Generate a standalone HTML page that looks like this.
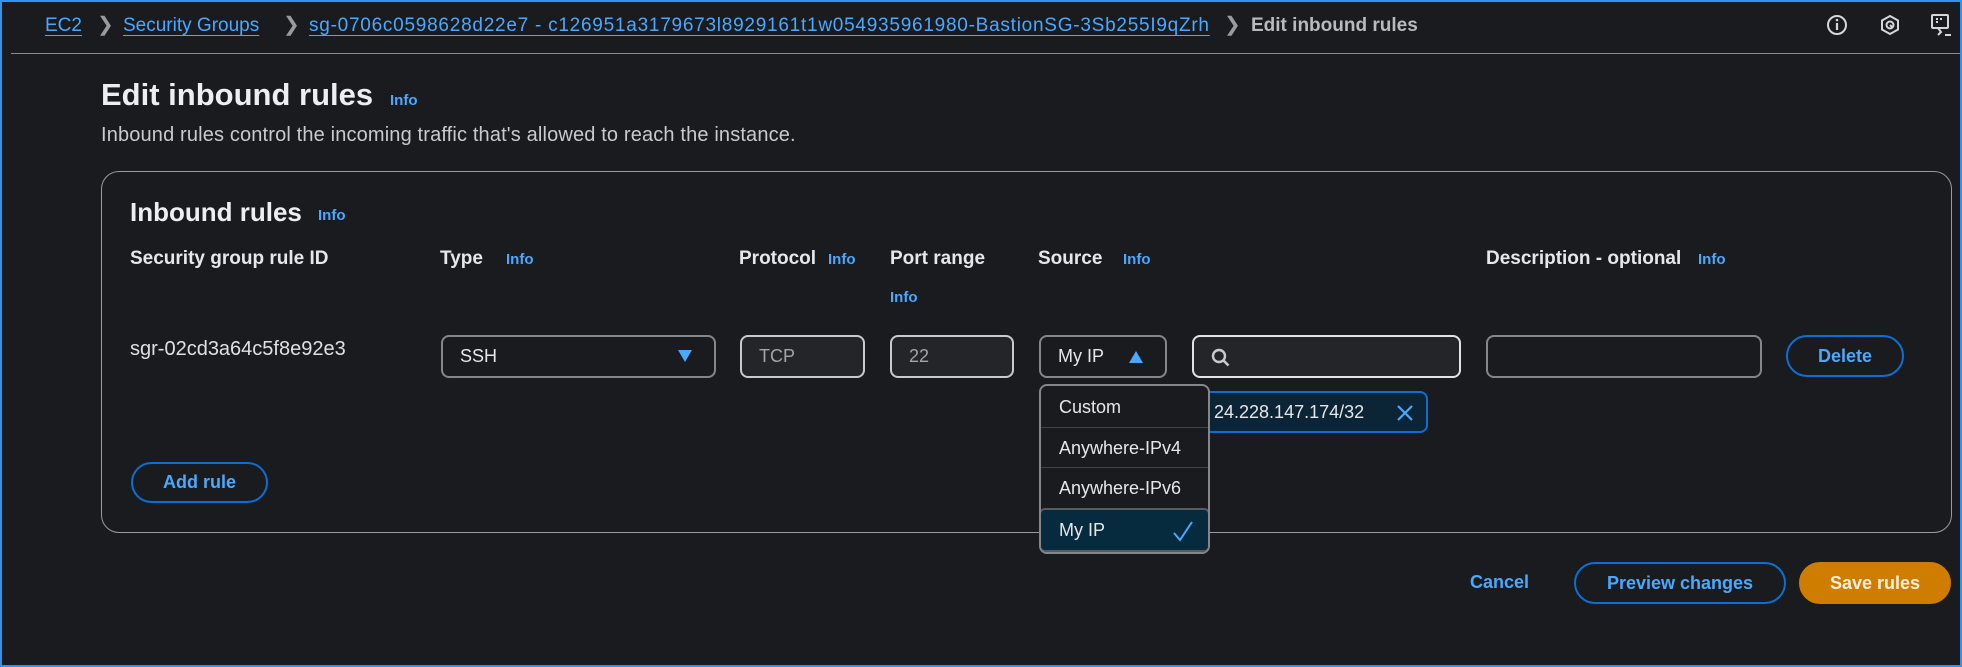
<!DOCTYPE html>
<html><head><meta charset="utf-8"><style>
*{box-sizing:border-box;margin:0;padding:0}
body{width:1962px;height:667px;background:#1a1b1e;font-family:"Liberation Sans",sans-serif;color:#d5d6da;position:relative;overflow:hidden}
.frame{position:absolute;left:0;top:0;width:1962px;height:667px;border:2px solid #2f93f0}
.a{position:absolute;line-height:1;white-space:nowrap}
.lnk{color:#4aa8ff;text-decoration:underline;text-underline-offset:4px}
.info{color:#4aa8ff;font-weight:bold;font-size:15px}
.hd{font-weight:bold;font-size:19px;color:#e6e7ea}
.box{position:absolute;border-radius:8px;display:flex;align-items:center;font-size:18px}
.btn{position:absolute;border-radius:22px;border:2px solid #0b6fd6;color:#4aa8ff;font-weight:bold;font-size:18px;display:flex;align-items:center;justify-content:center}
.chev{color:#9a9ba0;font-size:20px}
</style></head><body>
<div class="frame"></div>
<div class="a lnk" style="left:45px;top:16px;font-size:19px">EC2</div>
<div class="a chev" style="left:97px;top:15px">&#x276F;</div>
<div class="a lnk" style="left:123px;top:16px;font-size:19px">Security Groups</div>
<div class="a chev" style="left:283px;top:15px">&#x276F;</div>
<div class="a lnk" style="left:309px;top:16px;font-size:19px;letter-spacing:0.75px">sg-0706c0598628d22e7 - c126951a3179673l8929161t1w054935961980-BastionSG-3Sb255I9qZrh</div>
<div class="a chev" style="left:1224px;top:15px">&#x276F;</div>
<div class="a" style="left:1251px;top:16px;font-size:19px;color:#b9babe;font-weight:bold">Edit inbound rules</div>
<svg class="a" style="left:1825px;top:13px" width="24" height="24" viewBox="0 0 24 24"><circle cx="12" cy="12" r="9" fill="none" stroke="#d5d6da" stroke-width="2"/><line x1="12" y1="10" x2="12" y2="17" stroke="#d5d6da" stroke-width="2.2"/><circle cx="12" cy="7" r="1.3" fill="#d5d6da"/></svg>
<svg class="a" style="left:1878px;top:13px" width="24" height="24" viewBox="0 0 24 24"><path d="M12 3l8 4.5v9L12 21l-8-4.5v-9z" fill="none" stroke="#d5d6da" stroke-width="2"/><circle cx="12" cy="12" r="3.5" fill="none" stroke="#d5d6da" stroke-width="2"/><path d="M12 12l3 3" stroke="#d5d6da" stroke-width="2"/></svg>
<svg class="a" style="left:1929px;top:12px" width="26" height="26" viewBox="0 0 26 26"><rect x="3" y="3" width="16" height="13" rx="1" fill="none" stroke="#d5d6da" stroke-width="2"/><path d="M7 7h2M11 7h2M7 10h2" stroke="#d5d6da" stroke-width="2"/><path d="M9 16l3 4-3 3" fill="none" stroke="#d5d6da" stroke-width="2"/><path d="M16 23h6" stroke="#d5d6da" stroke-width="2"/></svg>
<div class="a" style="left:11px;top:53px;width:1949px;height:1px;background:#8a8b90"></div>

<div class="a" style="left:101px;top:79px;font-size:31px;font-weight:bold;color:#eeeef0">Edit inbound rules</div>
<div class="a info" style="left:390px;top:93px">Info</div>
<div class="a" style="left:101px;top:125px;font-size:20px;letter-spacing:0.15px;color:#c9cace">Inbound rules control the incoming traffic that's allowed to reach the instance.</div>

<div class="a" style="left:101px;top:171px;width:1851px;height:362px;border:1px solid #9a9ba0;border-radius:18px"></div>
<div class="a" style="left:130px;top:199px;font-size:26px;font-weight:bold;color:#eeeef0">Inbound rules</div>
<div class="a info" style="left:318px;top:208px">Info</div>

<div class="a hd" style="left:130px;top:249px">Security group rule ID</div>
<div class="a hd" style="left:440px;top:249px">Type</div><div class="a info" style="left:506px;top:252px">Info</div>
<div class="a hd" style="left:739px;top:249px">Protocol</div><div class="a info" style="left:828px;top:252px">Info</div>
<div class="a hd" style="left:890px;top:249px">Port range</div><div class="a info" style="left:890px;top:290px">Info</div>
<div class="a hd" style="left:1038px;top:249px">Source</div><div class="a info" style="left:1123px;top:252px">Info</div>
<div class="a hd" style="left:1486px;top:249px">Description - optional</div><div class="a info" style="left:1698px;top:252px">Info</div>

<div class="a" style="left:130px;top:339px;font-size:20px;color:#dfe0e3">sgr-02cd3a64c5f8e92e3</div>
<div class="box" style="left:441px;top:335px;width:275px;height:43px;border:2px solid #85868b;padding-left:17px;color:#e6e7ea">SSH<span style="position:absolute;right:22px;top:13px;width:0;height:0;border-left:7px solid transparent;border-right:7px solid transparent;border-top:12px solid #4aa8ff"></span></div>
<div class="box" style="left:740px;top:335px;width:125px;height:43px;border:2px solid #c9cace;background:#232528;padding-left:17px;color:#a4a5aa">TCP</div>
<div class="box" style="left:890px;top:335px;width:124px;height:43px;border:2px solid #c9cace;background:#232528;padding-left:17px;color:#a4a5aa">22</div>
<div class="box" style="left:1039px;top:335px;width:128px;height:43px;border:2px solid #85868b;padding-left:17px;color:#e6e7ea">My IP<span style="position:absolute;right:22px;top:14px;width:0;height:0;border-left:7px solid transparent;border-right:7px solid transparent;border-bottom:12px solid #4aa8ff"></span></div>
<div class="box" style="left:1192px;top:335px;width:269px;height:43px;border:2px solid #e2e3e6;background:#232528">
<svg style="position:absolute;left:17px;top:11px" width="20" height="20" viewBox="0 0 20 20"><circle cx="8" cy="8" r="6" fill="none" stroke="#c9cace" stroke-width="2.4"/><path d="M12.5 12.5l5 5" stroke="#c9cace" stroke-width="2.6"/></svg></div>
<div class="box" style="left:1486px;top:335px;width:276px;height:43px;border:2px solid #85868b"></div>
<div class="btn" style="left:1786px;top:335px;width:118px;height:42px">Delete</div>

<div class="box" style="left:1180px;top:391px;width:248px;height:42px;border:2px solid #0b6fd6;background:#0c2536;color:#e6e7ea;padding-left:32px">24.228.147.174/32
<svg style="position:absolute;right:12px;top:11px" width="18" height="18" viewBox="0 0 18 18"><path d="M2 2l14 14M16 2L2 16" stroke="#4aa8ff" stroke-width="2.2"/></svg></div>

<div class="a" style="left:1039px;top:384px;width:171px;height:170px;border:2px solid #85868b;border-radius:8px;background:#1a1b1e;overflow:hidden;font-size:18px;color:#e6e7ea">
<div style="height:42px;display:flex;align-items:center;padding-left:18px;border-bottom:1px solid #414246">Custom</div>
<div style="height:40px;display:flex;align-items:center;padding-left:18px;border-bottom:1px solid #414246">Anywhere-IPv4</div>
<div style="height:40px;display:flex;align-items:center;padding-left:18px">Anywhere-IPv6</div>
<div style="height:44px;display:flex;align-items:center;padding-left:18px;background:#062a3e;border:2px solid #5a5b60;border-radius:6px;margin:0 -2px;position:relative">My IP
<svg style="position:absolute;right:14px;top:9px" width="22" height="24" viewBox="0 0 22 24"><path d="M2 14l6 7L20 3" fill="none" stroke="#4aa8ff" stroke-width="2"/></svg></div>
</div>

<div class="btn" style="left:131px;top:462px;width:137px;height:41px">Add rule</div>

<div class="a" style="left:1470px;top:573px;font-size:18px;font-weight:bold;color:#4aa8ff">Cancel</div>
<div class="btn" style="left:1574px;top:562px;width:212px;height:42px">Preview changes</div>
<div class="btn" style="left:1799px;top:562px;width:152px;height:42px;background:#cf7d00;border-color:#cf7d00;color:#fbeedd">Save rules</div>
</body></html>
